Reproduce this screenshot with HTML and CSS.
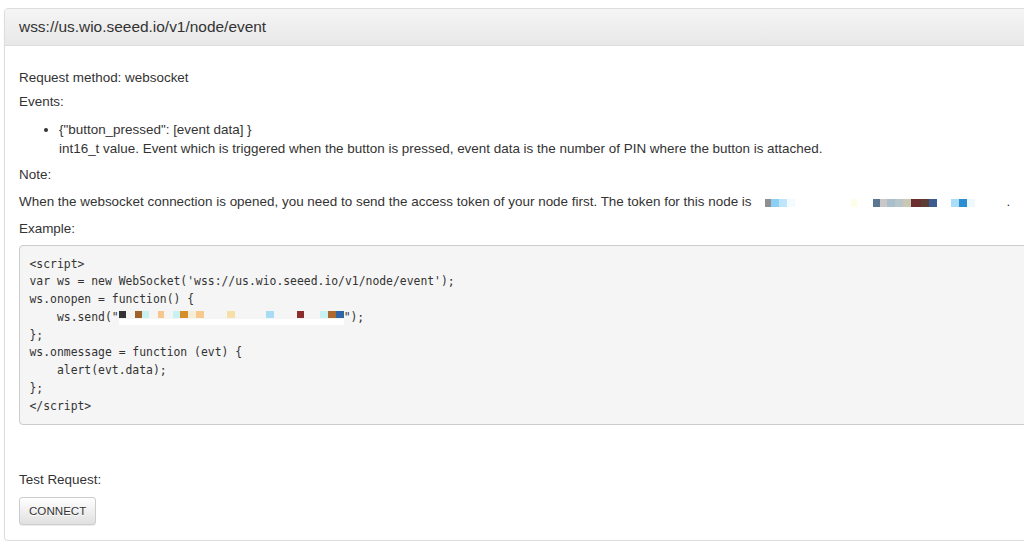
FILE: index.html
```html
<!DOCTYPE html>
<html>
<head>
<meta charset="utf-8">
<title>Node event</title>
<link rel="stylesheet" href="styles.css">
</head>
<body>
<div class="panel">
  <div class="panel-heading">wss://us.wio.seeed.io/v1/node/event</div>
  <div class="panel-body">
    <div class="line first">Request method: websocket</div>
    <div class="line events-label">Events:</div>
    <ul class="events">
      <li>{"button_pressed": [event data] }<br>int16_t value. Event which is triggered when the button is pressed, event data is the number of PIN where the button is attached.</li>
    </ul>
    <div class="line note">Note:</div>
    <div class="line note">When the websocket connection is opened, you need to send the access token of your node first. The token for this node is<span class="token-text"></span>.</div>
    <div class="line note">Example:</div>
<pre class="code">&lt;script&gt;
var ws = new WebSocket('wss://us.wio.seeed.io/v1/node/event');
ws.onopen = function() {
    ws.send("<span class="token-code"></span>");
};
ws.onmessage = function (evt) {
    alert(evt.data);
};
&lt;/script&gt;</pre>
    <div class="line test">Test Request:</div>
    <button class="btn">CONNECT</button>
  </div>
</div>
</body>
</html>
```

FILE: styles.css
```css
html, body {
  margin: 0;
  padding: 0;
  overflow: hidden;
  background: #fff;
}
body {
  font-family: "Liberation Sans", Arial, sans-serif;
  font-size: 13.45px;
  color: #333;
  line-height: 20px;
}
.panel {
  margin: 8px 0 0 4px;
  width: 1040px;
  border: 1px solid #ddd;
  border-radius: 4px;
  box-shadow: 0 1px 2px rgba(0,0,0,.05);
  background: #fff;
}
.panel-heading {
  padding: 9px 14px;
  line-height: 18px;
  font-size: 15.45px;
  color: #333;
  background: linear-gradient(#f5f5f5, #e8e8e8);
  border-bottom: 1px solid #ddd;
  border-radius: 3px 3px 0 0;
}
.panel-body {
  padding: 22px 14px 15px 14px;
}
.line {
  line-height: 20px;
}
.events-label {
  margin-top: 4px;
}
.events {
  margin: 8px 0 0 0;
  padding-left: 40px;
  line-height: 19px;
}
.note {
  margin-top: 7px;
}
.token-text {
  display: inline-block;
  width: 242px;
  height: 8px;
  margin-left: 13px;
  vertical-align: -1px;
  background: linear-gradient(to right,
    #8f8f8f 0 6px, #8ccff5 6px 14px, #bde6fb 14px 22px, #f4fbff 22px 30px,
    transparent 30px 86px, #fefde8 86px 92px, transparent 92px 108px,
    #5b7690 108px 115px, #c8c8c8 115px 122px, #a9bfca 122px 130px,
    #b8c5cb 130px 138px, #c9c8b4 138px 146px, #6b2d2d 146px 156px,
    #5a3d33 156px 164px, #3b5b92 164px 172px, transparent 172px 186px,
    #a9ddf9 186px 194px, #2c8ed2 194px 202px, #eef8fd 202px 210px,
    transparent 210px 242px);
}
.code {
  margin: 6px 0 0 0;
  padding: 9.5px 9.5px 9px 9.5px;
  background: #f5f5f5;
  border: 1px solid #ccc;
  border-radius: 4px;
  font-family: "DejaVu Sans Mono", "Liberation Mono", monospace;
  font-size: 11.4px;
  line-height: 17.75px;
  color: #333;
  white-space: pre;
}
.token-code {
  display: inline-block;
  width: 225px;
  height: 14px;
  vertical-align: -4px;
  background:
    linear-gradient(to right,
      #333 0 7px, transparent 7px 16px, #a0612b 16px 23px, #c8f2f2 23px 30px,
      transparent 30px 39px, #f6c68c 39px 45px, transparent 45px 54px,
      #c8f2f2 54px 61px, #d48e2c 61px 69px, #f5efd9 69px 77px, #f7c98f 77px 85px,
      transparent 85px 108px, #f7e0a8 108px 116px, transparent 116px 147px,
      #a8dcf5 147px 155px, transparent 155px 178px, #8b2d2d 178px 185px,
      transparent 185px 201px, #c8f2f2 201px 209px, #ac6a2e 209px 217px,
      #2f66a8 217px 225px) left top / 100% 7px no-repeat,
    linear-gradient(#fff, #fff) left bottom / 100% 6px no-repeat;
}
.test {
  margin-top: 45px;
}
.btn {
  display: block;
  margin-top: 7px;
  padding: 4px 9px;
  font-family: "Liberation Sans", Arial, sans-serif;
  font-size: 11.6px;
  line-height: 18px;
  color: #333;
  background: linear-gradient(#fff, #e0e0e0);
  border: 1px solid #ccc;
  border-radius: 3px;
  text-shadow: 0 1px 0 #fff;
  box-shadow: inset 0 1px 0 rgba(255,255,255,.15), 0 1px 1px rgba(0,0,0,.075);
}
```
